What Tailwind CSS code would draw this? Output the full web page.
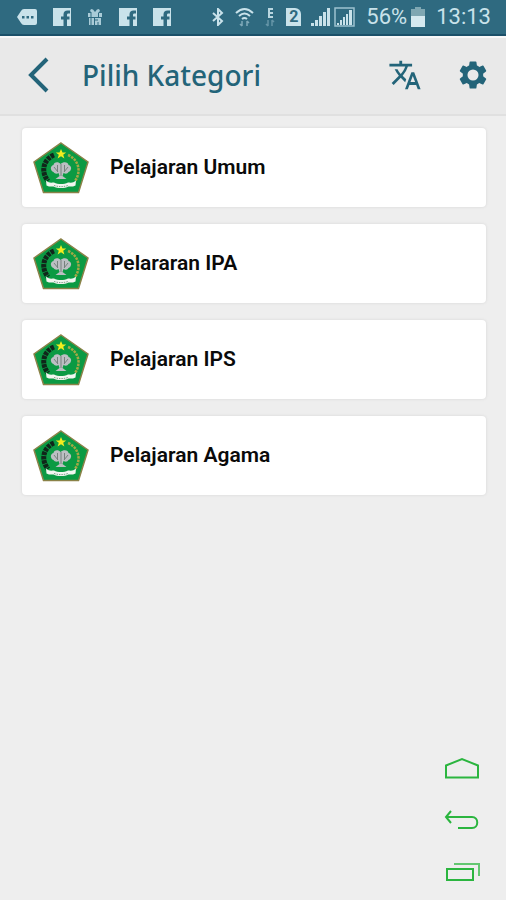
<!DOCTYPE html>
<html lang="id">
  <head>
    <meta charset="UTF-8" />
    <meta name="viewport" content="width=device-width, initial-scale=1.0" />
    <title>Pilih Kategori</title>
    <script src="https://cdn.jsdelivr.net/npm/@tailwindcss/browser@4"></script>
  </head>

  <body class="bg-[#eeeeee] min-h-screen flex flex-col font-['Roboto',sans-serif]">
    <!-- shared shapes -->
    <svg class="hidden" aria-hidden="true">
      <symbol id="facebook" viewBox="0 0 18 18">
        <path fill="#c9e2ea" d="M0 0h18v18h-4v-6.500h2.500v-3H14V7c0-1 .5-1.500 1.500-1.500H17v-3h-2.500C12 2.500 10.500 4 10.500 6.500v2H8v3h2.500V18H0z" />
      </symbol>
      <symbol id="emblem" viewBox="0 0 56 52">
        <path d="M28 1 55 20 45.500 50.500h-35L1 20z" fill="#0b9a43" stroke="#8a8248" stroke-width="1.500" />
        <path d="M21 13C11 17 7 29 15 39" fill="none" stroke="#10261a" stroke-width="5" stroke-dasharray="3.500 .8" />
        <path d="M35 13c10 4 14 16 7 26" fill="none" stroke="#a5a845" stroke-width="2.500" stroke-dasharray="2.500 1" />
        <path d="m28 7 1.500 3.500h3.700l-3 2.300 1.200 3.700-3.400-2.200-3.400 2.200 1.200-3.700-3-2.300h3.700z" fill="#f4ec1f" />
        <path d="M27.500 22c-2-3-7-2-7 1-4 1-3 6 0 7 1 2 4 2 5 1l1 3-4 3h11l-4-3 1-3c2 1 4 1 5-1 3-1 4-6 0-7 0-3-5-4-8-1z" fill="#bcbfc3" />
        <path d="M28 22v12M24.500 23v7M31.500 23v7M21 25l4 5M35 25l-4 5" fill="none" stroke="#77817e" stroke-width="1" />
        <path d="M13 38.500c3 3 6 2 8 2 4 2 10 2 14 0 2 0 5 1 8-2l-.5 5c-3 1.500-5 1-7 1-4 2-11 2-15 0-2 0-4 .5-7-1z" fill="#f2f6f0" />
        <path d="M21 43.500c5 1.500 9 1.500 14 0" fill="none" stroke="#81a08b" stroke-width="1" stroke-dasharray="1.500 1" />
      </symbol>
    </svg>

    <div class="bg-[#2f6a80] border-b-2 border-[#1b5069] h-9 pl-[17px] pr-[15px] flex justify-between items-center text-[22px] leading-none text-[#c9e2ea]">
      <div class="flex items-center gap-4">
        <svg class="w-5 h-[18px]" viewBox="0 0 20 18">
          <path fill="#c9e2ea" d="M7 1h11q2 0 2 2v12q0 2-2 2H7q-2 0-3-2L0 9l4-6q1-2 3-2z" />
          <path fill="#2f6a80" d="M5 8h2.500v2.500H5zm4.500 0H12v2.500H9.500zm4.500 0h2.500v2.500H14z" />
        </svg>
        <svg class="w-[18px] h-[18px]"><use href="#facebook" /></svg>
        <svg class="w-4 h-[18px]" viewBox="0 0 16 18">
          <path fill="#a9cbd7" d="M1 5h4L3 3l1-2 2 .5L8 4l2-2.500L12 1l1 2-2 2h4v4H1zm1 5h5v7H2zm6 0h6v7H8z" />
          <path d="M4 5v12M11.500 5v5M8 12h3M11 14v3" stroke="#2f6a80" stroke-width="1" fill="none" />
        </svg>
        <svg class="w-[18px] h-[18px]"><use href="#facebook" /></svg>
        <svg class="w-[18px] h-[18px]"><use href="#facebook" /></svg>
      </div>

      <div class="flex items-center gap-[11px]">
        <svg class="w-3 h-[18px]" viewBox="0 0 12 18">
          <path d="m1 5 9 8-4 4V1l4 4-9 8" fill="none" stroke="#c9e2ea" stroke-width="2" />
        </svg>
        <svg class="w-[19px] h-5" viewBox="0 0 19 20">
          <path d="M1 6q8.500-8 17 0M4 9q5.500-5 11 0M7 12q2.500-2 5 0" fill="none" stroke="#c9e2ea" stroke-width="2" />
          <path d="M7 14v5m-2-2 2 2M12 19v-5m2 2-2-2" fill="none" stroke="#7fa9b9" stroke-width="1.500" />
        </svg>
        <svg class="w-[10px] h-5" viewBox="0 0 10 20">
          <path d="M8 2H4v8h4M4 6h4" fill="none" stroke="#b9d6e0" stroke-width="2" />
          <path d="M3 13v6m-2-2 2 2M7 19v-6m2 2-2-2" fill="none" stroke="#6595a7" stroke-width="1.500" />
        </svg>
        <div class="flex items-center gap-[10px]">
          <span class="w-[15px] h-[18px] bg-[#c9e2ea] text-[#2f6a80] rounded-tr-md text-base leading-[18px] font-bold text-center">2</span>
          <div class="flex items-center gap-1">
            <svg class="w-[19px] h-[18px]" viewBox="0 0 19 18">
              <path fill="#c9e2ea" d="M0 15h3v3H0zm4-3h3v6H4zm4-4h3v10H8zm4-4h3v14h-3zm4-4h3v18h-3z" />
            </svg>
            <svg class="w-[21px] h-5" viewBox="0 0 21 20">
              <path d="M1 1h19v18H1z" fill="none" stroke="#9dc2cf" stroke-width="1.500" />
              <path fill="#c9e2ea" d="M3 16h2v2H3zm3-3h2v5H6zm3-3h2v8H9zm3-3h2v11h-2zm3-4h3v15h-3z" />
            </svg>
          </div>
        </div>
        <div class="flex items-center gap-1">
          <span>56%</span>
          <svg class="w-[14px] h-5" viewBox="0 0 14 20">
            <path fill="#7fa7b2" d="M4 0h6v2h4v8H0V2h4z" />
            <path fill="#d5e9ef" d="M0 9h14v11H0z" />
          </svg>
        </div>
        <span>13:13</span>
      </div>
    </div>

    <header class="bg-[#e9e9e9] border-t-2 border-t-[#f8f8f8] border-b-2 border-b-[#e0e0e0] h-20 pl-6 pr-4 pb-[2px] flex items-center text-[#236479]">
      <button type="button" aria-label="Kembali" class="w-7 h-10 flex items-center justify-center">
        <svg class="w-6 h-9" viewBox="0 0 24 36">
          <path d="M21 2 5 18l16 16" fill="none" stroke="currentColor" stroke-width="4" />
        </svg>
      </button>
      <h1 class="ml-[30px] flex-1 font-['Noto_Sans',sans-serif] text-[28px] leading-10 font-medium">Pilih Kategori</h1>
      <button type="button" aria-label="Bahasa">
        <svg class="w-[34px] h-[34px]" viewBox="0 0 24 24">
          <path fill="currentColor" d="m12.870 15.070-2.540-2.510.03-.03A17.520 17.520 0 0 0 14.070 6H17V4h-7V2H8v2H1v2h11.170C11.500 7.920 10.440 9.750 9 11.350 8.070 10.320 7.300 9.190 6.690 8h-2c.73 1.630 1.730 3.170 2.980 4.560l-5.090 5.020L4 19l5-5 3.110 3.110.76-2.040zM18.500 10h-2L12 22h2l1.120-3h4.750L21 22h2l-4.500-12zm-2.620 7 1.620-4.330L19.120 17h-3.240z" />
        </svg>
      </button>
      <button type="button" aria-label="Pengaturan" class="ml-[34px]">
        <svg class="w-[34px] h-[34px]" viewBox="0 0 24 24">
          <path fill="currentColor" d="M19.140 12.940c.04-.3.060-.61.060-.94s-.02-.64-.07-.94l2.030-1.580a.49.49 0 0 0 .12-.61l-1.920-3.320a.49.49 0 0 0-.59-.22l-2.390.96a7 7 0 0 0-1.620-.94l-.36-2.540a.48.48 0 0 0-.48-.41h-3.840a.47.47 0 0 0-.47.41l-.36 2.540c-.59.24-1.130.57-1.620.94l-2.390-.96a.48.48 0 0 0-.59.22L2.740 8.870a.48.48 0 0 0 .12.610l2.030 1.580c-.05.3-.09.63-.09.94s.02.640.07.940l-2.030 1.580a.49.49 0 0 0-.12.610l1.920 3.320c.12.220.37.290.59.220l2.390-.96c.5.380 1.030.700 1.620.940l.36 2.540c.05.240.240.410.480.410h3.840c.24 0 .44-.17.47-.41l.36-2.540a7 7 0 0 0 1.620-.94l2.390.96c.22.080.47 0 .59-.22l1.920-3.320a.48.48 0 0 0-.12-.61zM12 15.900a3.900 3.900 0 1 1 0-7.800 3.900 3.900 0 0 1 0 7.800z" />
        </svg>
      </button>
    </header>

    <main class="pt-3 pr-5 pl-[22px] flex flex-col gap-[17px] text-[21px] font-semibold text-[#0a0a0a]">
      <a href="#umum" class="h-[79px] px-[11px] flex items-center gap-[21px] bg-white rounded-sm shadow-[0_0_3px_#d4d4d4]">
        <svg class="w-14 h-[52px]"><use href="#emblem" /></svg>
        <span>Pelajaran Umum</span>
      </a>
      <a href="#ipa" class="h-[79px] px-[11px] flex items-center gap-[21px] bg-white rounded-sm shadow-[0_0_3px_#d4d4d4]">
        <svg class="w-14 h-[52px]"><use href="#emblem" /></svg>
        <span>Pelararan IPA</span>
      </a>
      <a href="#ips" class="h-[79px] px-[11px] flex items-center gap-[21px] bg-white rounded-sm shadow-[0_0_3px_#d4d4d4]">
        <svg class="w-14 h-[52px]"><use href="#emblem" /></svg>
        <span>Pelajaran IPS</span>
      </a>
      <a href="#agama" class="h-[79px] px-[11px] flex items-center gap-[21px] bg-white rounded-sm shadow-[0_0_3px_#d4d4d4]">
        <svg class="w-14 h-[52px]"><use href="#emblem" /></svg>
        <span>Pelajaran Agama</span>
      </a>
    </main>

    <nav class="mt-auto ml-auto pr-[26px] pb-4 flex flex-col gap-7 text-[#2bb53f]">
      <button type="button" aria-label="Beranda">
        <svg class="w-9 h-6" viewBox="0 0 36 24">
          <path d="M2 21.500V9.500L18 3l16 6.500v12z" fill="none" stroke="currentColor" stroke-width="2" />
        </svg>
      </button>
      <button type="button" aria-label="Kembali ke layar sebelumnya">
        <svg class="w-9 h-6" viewBox="0 0 36 24">
          <path d="M7 3 2 9l5 6M2 9h26c7 0 7 11 0 11H14" fill="none" stroke="currentColor" stroke-width="2" />
        </svg>
      </button>
      <button type="button" aria-label="Aplikasi terbaru">
        <svg class="w-9 h-6" viewBox="0 0 36 24">
          <path d="M3 9h26v11H3z" fill="none" stroke="currentColor" stroke-width="2" />
          <path d="M10 4h25v12" fill="none" stroke="#63c771" stroke-width="2" />
        </svg>
      </button>
    </nav>
  </body>
</html>
